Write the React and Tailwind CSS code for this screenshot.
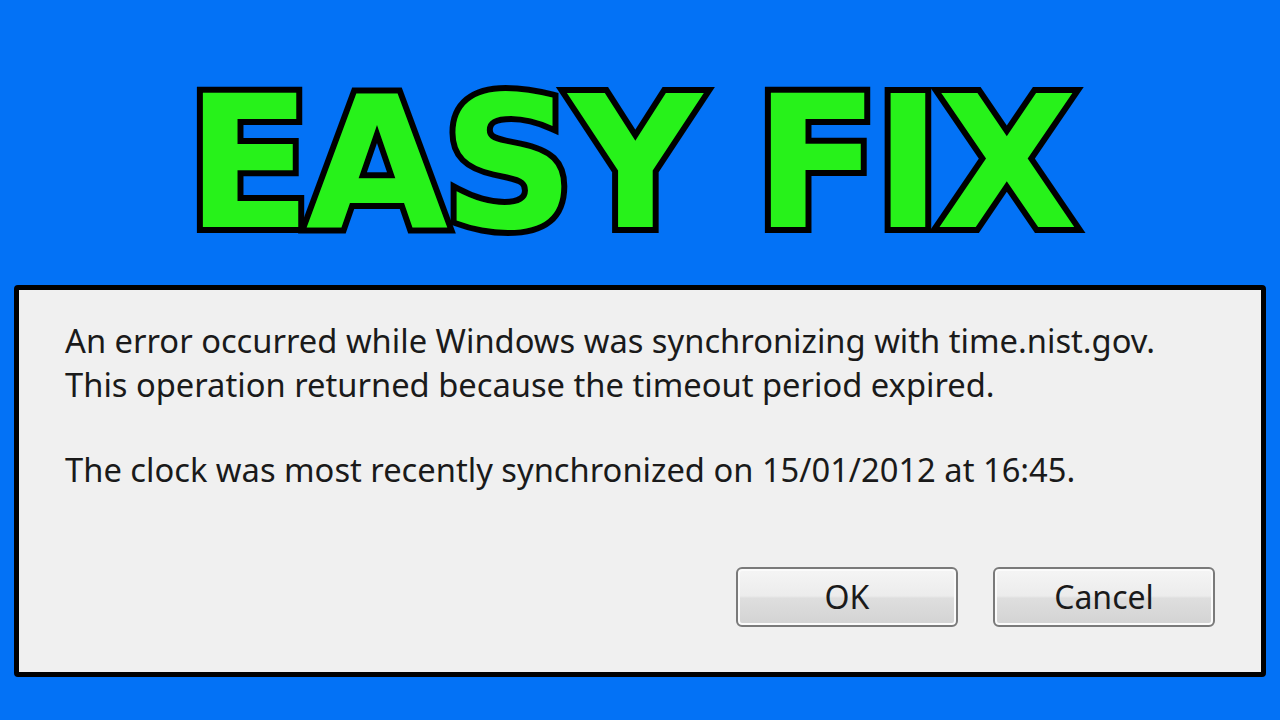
export default function App() {
  return (
    <div className="w-[1280px] h-[720px] bg-[#0372f6] flex flex-col overflow-hidden">
      <div className="h-[285px] flex items-center justify-center">
        <h1
          className="text-[#27f21a] font-bold text-[184px] leading-none tracking-[-6px] [-webkit-text-stroke:12px_black] [paint-order:stroke_fill] pt-[40px] mr-[22px]"
          style={{ fontFamily: '"DejaVu Sans", Verdana, sans-serif' }}
        >
          EASY FIX
        </h1>
      </div>
      <div className="mx-[14px] h-[392px] border-[5px] border-black rounded-[4px] bg-[#f0f0f0] flex flex-col pl-[46px] pr-[46px] pt-[29px] pb-[45px]">
        <div
          className="text-[#1a1a1a] text-[32.7px] leading-[44px]"
          style={{ fontFamily: '"Noto Sans", "Open Sans", sans-serif' }}
        >
          <p>An error occurred while Windows was synchronizing with time.nist.gov.</p>
          <p>This operation returned because the timeout period expired.</p>
          <p className="mt-[41px]">The clock was most recently synchronized on 15/01/2012 at 16:45.</p>
        </div>
        <div className="mt-auto flex justify-end gap-[35px]">
          {['OK', 'Cancel'].map((t) => (
            <button
              key={t}
              className="w-[222px] h-[60px] rounded-[6px] border-[2px] border-[#7a7a7a] bg-[linear-gradient(#f5f5f5_0%,#ececec_48%,#dedede_52%,#d3d3d3_100%)] shadow-[inset_0_0_0_2px_#fbfbfb] text-[32px] text-[#1a1a1a]"
              style={{ fontFamily: '"Noto Sans", "Open Sans", sans-serif' }}
            >
              {t}
            </button>
          ))}
        </div>
      </div>
    </div>
  );
}
